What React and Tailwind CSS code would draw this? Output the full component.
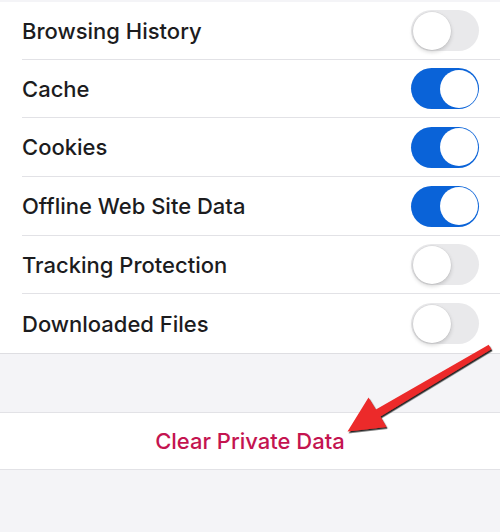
import { useState } from 'react';

const rows = [
  { label: 'Browsing History', on: false, h: 'h-[58px]' },
  { label: 'Cache', on: true, h: 'h-[58px]' },
  { label: 'Cookies', on: true, h: 'h-[59px]' },
  { label: 'Offline Web Site Data', on: true, h: 'h-[59px]' },
  { label: 'Tracking Protection', on: false, h: 'h-[58px]' },
  { label: 'Downloaded Files', on: false, h: 'h-[59px]' },
];

function Toggle({ on, onClick }) {
  return (
    <button
      onClick={onClick}
      className={`relative w-[68px] h-[41px] rounded-full shrink-0 ${on ? 'bg-[#0a63d8]' : 'bg-[#e9e9eb]'}`}
    >
      <span
        className={`absolute top-[1.5px] w-[38px] h-[38px] rounded-full bg-white ${
          on ? 'left-[28.5px]' : 'left-[1.5px] shadow-[0_2px_4px_rgba(0,0,0,0.18),0_0_0_0.5px_rgba(0,0,0,0.06)]'
        }`}
      />
    </button>
  );
}

export default function App() {
  const [values, setValues] = useState(rows.map(r => r.on));

  const flip = (i) => {
    const next = [...values];
    next[i] = !next[i];
    setValues(next);
  };

  return (
    <div
      className="relative w-[500px] h-[532px] overflow-hidden bg-[#f4f4f7]"
      style={{ fontFamily: 'Inter, "Noto Sans", sans-serif' }}
    >
      <div className="h-[2px]" />

      {/* Settings list */}
      <div className="bg-white border-b border-[#dedee2]">
        {rows.map((row, i) => (
          <div key={row.label} className="pl-[22px]">
            <div
              className={`${row.h} flex items-center justify-between pr-[21px] ${
                i < rows.length - 1 ? 'border-b border-[#e2e2e6]' : ''
              }`}
            >
              <span className="text-[22px] font-medium text-[#1c1c1e] pt-[1px]">{row.label}</span>
              <Toggle on={values[i]} onClick={() => flip(i)} />
            </div>
          </div>
        ))}
      </div>

      <div className="h-[58px]" />

      {/* Clear button */}
      <div className="bg-white border-y border-[#e2e2e6] h-[58px] flex items-center justify-center">
        <span className="text-[22px] font-medium text-[#c41450] pt-[1px]">Clear Private Data</span>
      </div>

      {/* Annotation arrow */}
      <svg className="absolute inset-0 pointer-events-none" width="500" height="532" viewBox="0 0 500 532">
        <defs>
          <filter id="arrowShadow" x="-10%" y="-10%" width="130%" height="130%">
            <feDropShadow dx="1.2" dy="1.6" stdDeviation="0.7" floodColor="#000" floodOpacity="0.85" />
          </filter>
        </defs>
        <polygon
          points="488.7,344.8 375.9,409.5 368.5,397.5 347.5,431.5 386.5,427 380.4,416.5 491.3,349.2"
          fill="#ec2a2a"
          filter="url(#arrowShadow)"
        />
      </svg>
    </div>
  );
}
